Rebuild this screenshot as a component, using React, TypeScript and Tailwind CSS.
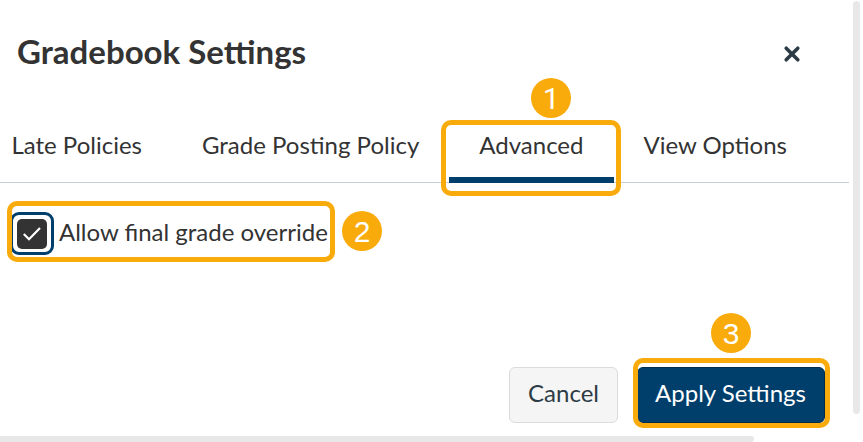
import type { ReactNode } from "react";

function Step({ n, className }: { n: number; className: string }) {
  return (
    <span
      className={`absolute flex size-10 items-center justify-center rounded-full bg-[#f9ab0b] pt-0.5 text-[30px] leading-none text-white ${n === 1 ? "font-[Roboto,sans-serif]" : "font-['Liberation_Sans',sans-serif]"} ${className}`}
    >
      {n}
    </span>
  );
}

function Outline({ className }: { className: string }) {
  return <span className={`pointer-events-none absolute rounded-[10px] border-5 border-[#f9ab0b] ${className}`} />;
}

function Tab({ children, active = false }: { children: ReactNode; active?: boolean }) {
  return (
    <div
      role="tab"
      aria-selected={active}
      className={`relative -mb-px flex h-[83px] shrink-0 items-center justify-center whitespace-nowrap border-b-6 px-[30px] pt-[13px] ${active ? "border-[#003f6c]" : "border-transparent"}`}
    >
      {children}
      {active && (
        <>
          <Outline className="-left-2 top-5 h-[76px] w-[180px]" />
          <Step n={1} className="left-[82px] -top-[22px]" />
        </>
      )}
    </div>
  );
}

export default function App() {
  return (
    <div className="flex h-[442px] w-[863px] flex-col overflow-hidden bg-white font-[Lato,Carlito,sans-serif] text-2xl leading-9 text-[#333333]">
      <div className="flex h-[436px] justify-between">
        <main className="flex h-full w-[849px] flex-col">
          <header className="flex h-[100px] items-center justify-between pl-[17px] pr-[48px] pt-1.5">
            <h1 className="-mt-1 text-[33px] font-bold leading-10">Gradebook Settings</h1>
            <button aria-label="Close" className="mt-px flex size-[18px] items-center justify-center">
              <svg viewBox="0 0 18 18" className="size-[18px]" fill="none" stroke="#2d3b45" strokeWidth="3.6" strokeLinecap="round">
                <path d="M3.2 3.2l11.6 11.6M14.8 3.2L3.2 14.8" />
              </svg>
            </button>
          </header>
          <nav role="tablist" className="flex h-[83px] border-b border-[#c7cdd1] pr-2">
            <div className="-ml-[18.6px] flex">
              <Tab>Late Policies</Tab>
              <Tab>Grade Posting Policy</Tab>
              <Tab active>Advanced</Tab>
              <Tab>View Options</Tab>
            </div>
          </nav>
          <section className="flex-1 pl-[10px] pt-[29px]">
            <label className="relative flex w-[380px] items-center">
              <span className="flex h-[43px] w-11 items-center justify-center rounded-[9px] border-3 border-[#003f6c]">
                <span className="flex size-[30px] items-center justify-center rounded-[5px] bg-[#333333]">
                  <svg viewBox="0 0 20 16" className="h-4 w-5" fill="none" stroke="white" strokeWidth="2.2">
                    <path d="M1.8 8l5.2 5.2L18 2" />
                  </svg>
                </span>
              </span>
              <span className="-mt-1 ml-[5px] whitespace-nowrap">Allow final grade override</span>
              <Outline className="-left-[3px] -top-[11px] h-[61px] w-[328px]" />
              <Step n={2} className="left-[332px] -top-px" />
            </label>
          </section>
          <footer className="flex justify-end gap-[19px] pb-[13px] pr-[24px]">
            <button className="h-14 w-[109px] rounded-md border border-[#d9dbdc] bg-[#f5f5f5] pb-[5px] text-[#2d3b45]">Cancel</button>
            <div className="relative">
              <button className="h-14 w-[188px] rounded-md border border-[#002c4d] bg-[#003f6c] pb-[5px] pr-px text-white">Apply Settings</button>
              <Outline className="-left-1 -top-[9px] h-[70px] w-[197px]" />
              <Step n={3} className="left-[74px] -top-[54px]" />
            </div>
          </footer>
        </main>
        <div className="mr-[3px] mt-px h-[413px] w-[7px] rounded-full bg-[#e8e8e8]" />
      </div>
      <div className="h-1.5 w-[754px] rounded-r-full bg-[#e8e8e8]" />
    </div>
  );
}
